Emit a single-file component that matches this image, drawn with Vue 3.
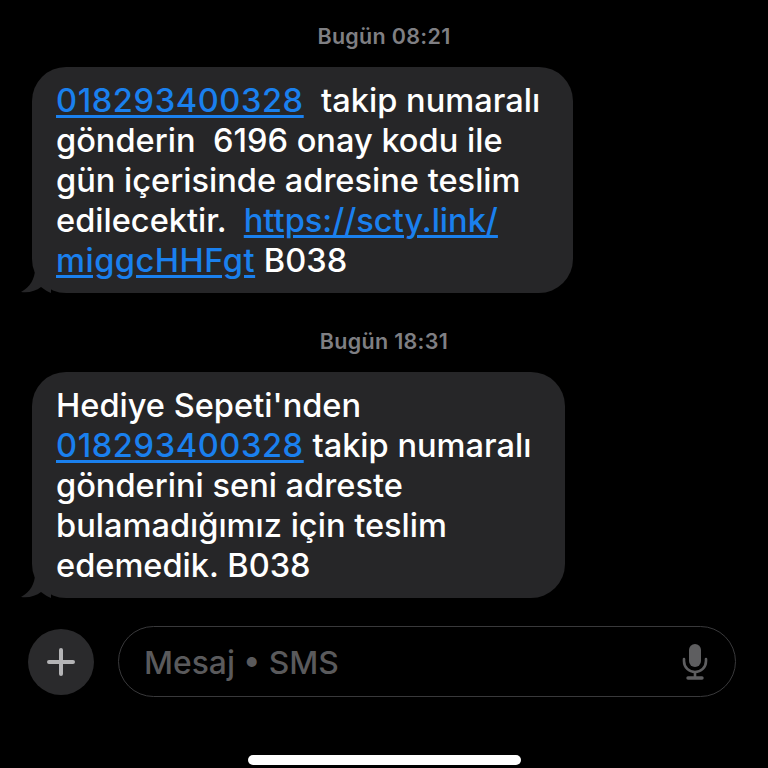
<template>
  <div class="screen">
    <section v-for="m in messages" :key="m.time" class="group">
      <div class="stamp">Bugün {{ m.time }}</div>
      <div class="bubble" :class="m.cls">
        <div v-for="(line, i) in m.lines" :key="i" class="line">
          <template v-for="(part, j) in line" :key="j">
            <a v-if="part.link" class="link" :class="part.cls">{{ part.text }}</a>
            <span v-else>{{ part.text }}</span>
          </template>
        </div>
        <svg class="tail" width="30" height="24" viewBox="0 0 30 24">
          <path d="M14 0 C14 10 9 18 0 23 C8 24 15 22 20 18 C24 21 27 23 30 24 L30 0 Z" fill="#262628" />
        </svg>
      </div>
    </section>

    <div class="composer">
      <div class="plus">
        <svg width="28" height="28" viewBox="0 0 28 28">
          <path d="M14 2 V26 M2 14 H26" stroke="#b4b4b6" stroke-width="4" stroke-linecap="round" />
        </svg>
      </div>
      <div class="field">
        <span class="placeholder">Mesaj • SMS</span>
        <svg class="mic" width="26" height="36" viewBox="0 0 26 36">
          <rect x="7" y="0" width="12" height="23" rx="6" fill="#5e5e60" />
          <path d="M2 15 V17 C2 23.5 7 28 13 28 C19 28 24 23.5 24 17 V15" fill="none" stroke="#5e5e60" stroke-width="2.6" stroke-linecap="round" />
          <path d="M13 28 V33" stroke="#5e5e60" stroke-width="2.6" />
          <path d="M6 34 H20" stroke="#5e5e60" stroke-width="3.4" stroke-linecap="round" />
        </svg>
      </div>
    </div>

    <div class="homebar"></div>
  </div>
</template>

<script setup>
const t = (text) => ({ text });
const l = (text, cls = "") => ({ text, link: true, cls });

const messages = [
  {
    time: "08:21",
    cls: "first",
    lines: [
      [l("018293400328", "num"), t("  takip numaralı")],
      [t("gönderin  6196 onay kodu ile")],
      [t("gün içerisinde adresine teslim")],
      [t("edilecektir.  "), l("https://scty.link/")],
      [l("miggcHHFgt", "wide"), t(" B038")],
    ],
  },
  {
    time: "18:31",
    cls: "second",
    lines: [
      [t("Hediye Sepeti'nden")],
      [l("018293400328", "num"), t(" takip numaralı")],
      [t("gönderini seni adreste")],
      [t("bulamadığımız için teslim")],
      [t("edemedik. B038")],
    ],
  },
];
</script>

<style>
html, body { margin: 0; background: #000; }
</style>

<style scoped>
.screen {
  width: 768px;
  height: 768px;
  background: #000;
  overflow: hidden;
  font-family: Inter, "Liberation Sans", sans-serif;
  display: flex;
  flex-direction: column;
  padding-top: 23px;
  box-sizing: border-box;
}
.group { padding-left: 32px; margin-bottom: 35px; }
.group:nth-of-type(2) { margin-bottom: 28px; }
.stamp {
  color: #7f7f83;
  font-size: 21.5px;
  font-weight: 600;
  letter-spacing: 0.3px;
  line-height: 26px;
  text-align: center;
  margin-left: -32px;
  margin-bottom: 18px;
  white-space: pre;
}
.bubble {
  position: relative;
  box-sizing: border-box;
  height: 226px;
  padding: 14px 24px 0;
  background: #262628;
  border-radius: 34px;
  color: #fff;
  font-size: 32.6px;
  font-weight: 500;
  line-height: 39.9px;
}
.bubble.first { width: 541px; }
.bubble.second { width: 533px; }
.line { white-space: pre; }
.link { color: #1a80ee; text-decoration: underline; text-decoration-thickness: 3px; text-underline-offset: 3px; }
.link.num { letter-spacing: 0.6px; }
.link.wide { letter-spacing: 0.5px; }
.tail { position: absolute; left: -11px; bottom: 0; }
.composer {
  display: flex;
  align-items: center;
  gap: 24px;
  padding-left: 28px;
}
.plus {
  width: 66px;
  height: 66px;
  border-radius: 50%;
  background: #2a2a2c;
  display: flex;
  align-items: center;
  justify-content: center;
}
.field {
  box-sizing: border-box;
  width: 618px;
  height: 71px;
  border: 1.5px solid #39393b;
  border-radius: 36px;
  display: flex;
  align-items: center;
  justify-content: space-between;
  padding: 0 27px 0 25px;
}
.placeholder { color: #5a5a5c; font-size: 31.8px; font-weight: 500; line-height: 40px; padding-top: 2px; }
.homebar {
  width: 273px;
  height: 10px;
  border-radius: 5px;
  background: #fff;
  margin: 58px 0 0 248px;
}
</style>
